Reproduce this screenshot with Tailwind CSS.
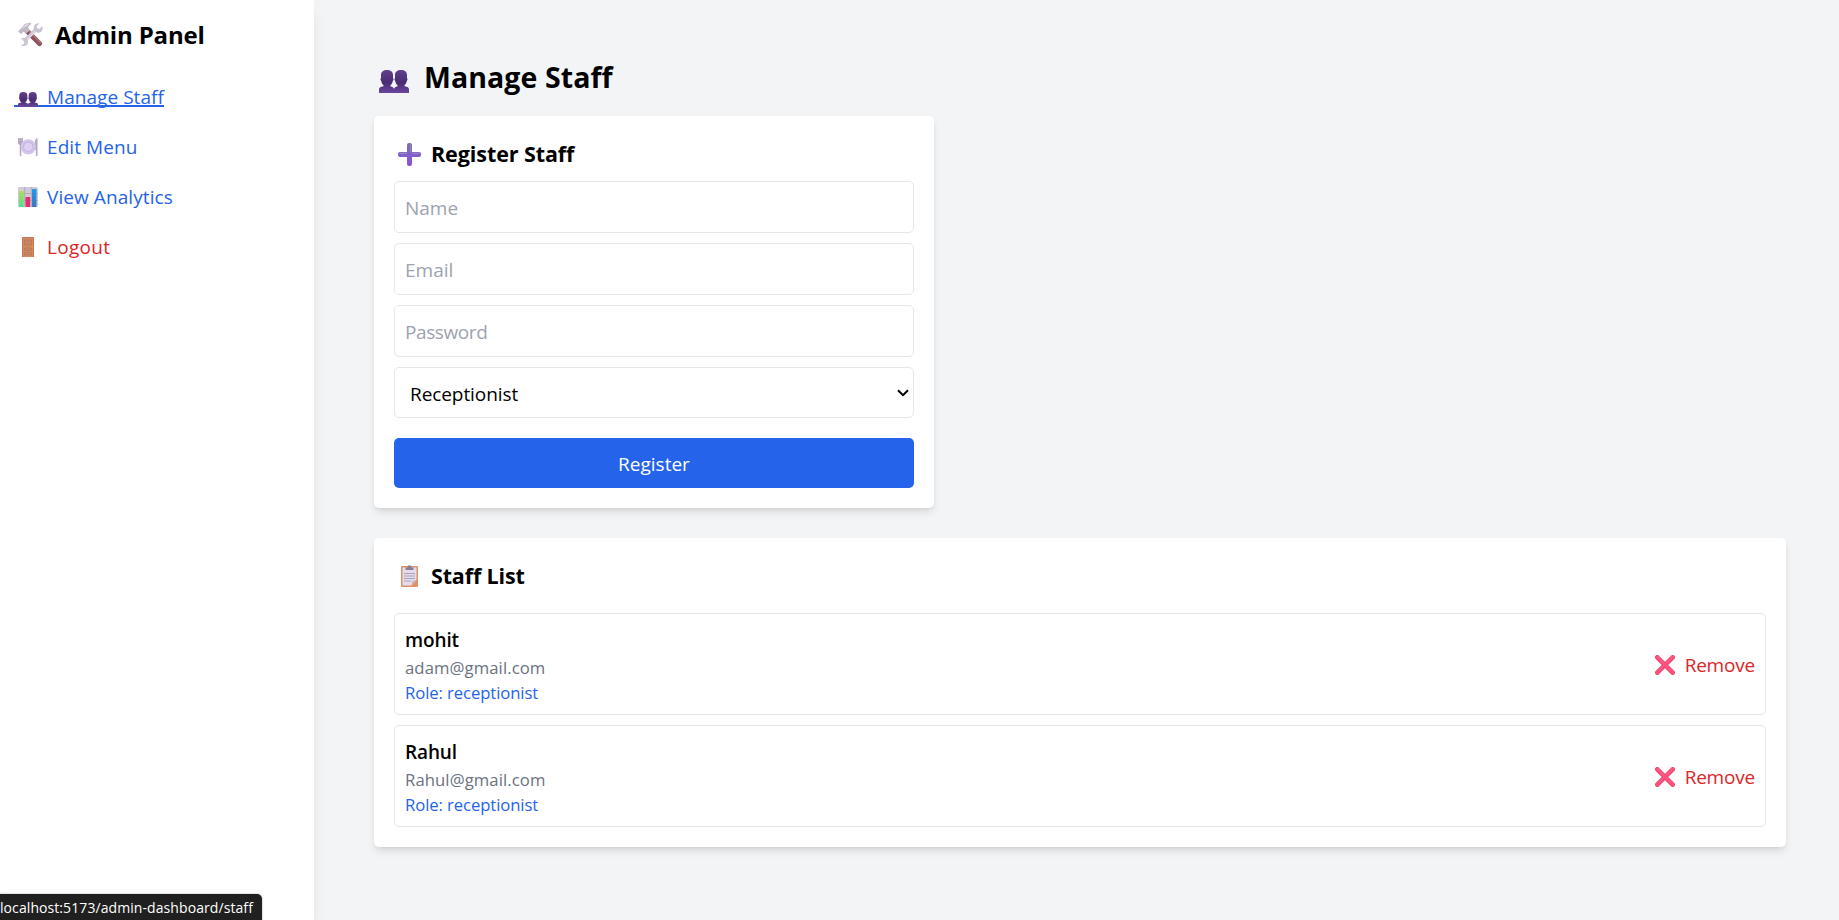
<!DOCTYPE html>
<html lang="en">
<head>
<meta charset="utf-8">
<title>Admin Panel</title>
<script src="https://cdn.jsdelivr.net/npm/@tailwindcss/browser@4"></script>
</head>
<body class="h-[920px] overflow-hidden bg-[#f3f4f6] font-['Open_Sans','Noto_Sans',sans-serif] text-[19px] leading-[30px] text-black">
<svg class="absolute h-0 w-0">
  <defs>
    <linearGradient id="bust" x1="0" y1="0" x2="0" y2="1"><stop offset="0" stop-color="#62408c"/><stop offset=".55" stop-color="#4a2c74"/><stop offset="1" stop-color="#6b469f"/></linearGradient>
    <linearGradient id="plusg" x1="0" y1="0" x2="0" y2="1"><stop offset="0" stop-color="#7a6fae"/><stop offset="1" stop-color="#8a52e0"/></linearGradient>
    <linearGradient id="green" x1="0" y1="0" x2="0" y2="1"><stop offset="0" stop-color="#b4dc54"/><stop offset="1" stop-color="#4fe08c"/></linearGradient>
    <linearGradient id="blue" x1="0" y1="0" x2="0" y2="1"><stop offset="0" stop-color="#1f9be6"/><stop offset="1" stop-color="#3f74c0"/></linearGradient>
    <symbol id="users" viewBox="0 0 30 23" preserveAspectRatio="none">
      <g fill="url(#bust)">
        <path d="M8 0C4.500 0 2 1.800 2 5v3c-.8.6-.6 2.400.2 3 .4 2 1.400 3.700 2.800 5L1.600 17C.6 17.400 0 18.300 0 19.500V23h15v-3.500c0-1.200-.6-2.100-1.600-2.500L11 16c1.400-1.300 2.400-3 2.800-5 .8-.6 1-2.400.2-3V5c0-3.200-2.500-5-6-5z"/>
        <path d="M22 0c-3.500 0-6 1.800-6 5v3c-.8.6-.6 2.400.2 3 .4 2 1.400 3.700 2.800 5l-2.400 1c-1 .4-1.600 1.300-1.600 2.500V23h15v-3.500c0-1.200-.6-2.100-1.600-2.500L25 16c1.400-1.300 2.400-3 2.800-5 .8-.6 1-2.400.2-3V5c0-3.200-2.500-5-6-5z"/>
      </g>
    </symbol>
    <symbol id="cross" viewBox="0 0 20 20">
      <path d="M2.300 2.300l15.400 15.400M17.700 2.300L2.300 17.700" stroke="#f0476b" stroke-width="4.600" stroke-linecap="round"/>
      <path d="M2.500 2l15.500 15.500M17.500 2L2 17.500" stroke="#ff5583" stroke-width="2.600" stroke-linecap="round"/>
    </symbol>
  </defs>
</svg>
<div class="flex h-full">
  <aside class="relative flex w-[314px] shrink-0 flex-col bg-white pt-[17px] pl-[14px] shadow-[0_10px_15px_-3px_rgba(0,0,0,0.1),0_4px_6px_-4px_rgba(0,0,0,0.1)]">
    <h2 class="mb-[30px] flex h-[35px] items-center text-[24px] leading-[35px] font-bold">
      <svg class="mr-[12px] ml-[4px] h-[25px] w-[25px]" viewBox="0 0 25 25" fill="none">
        <path d="M8.500 8.500l13 13" stroke="#8d5260" stroke-width="5" stroke-linecap="round"/>
        <path d="M10 8l13 13" stroke="#ae7474" stroke-width="1.500"/>
        <path d="M0 9.500l3-3L6.500 2 12 .5l1.500 1L10 5l1.500 3.500-3.500 3-2-2-3 2.500z" fill="#bfb9c8"/>
        <path d="M3 7l4-4.500L12 1 8.500 4.500z" fill="#ddd7e4"/>
        <path d="M6 19.500L19.500 6" stroke="#cbc5d4" stroke-width="3.600"/>
        <path d="M7.500 19L19 7.500" stroke="#e2deea" stroke-width="1.300"/>
        <path d="M21.500 1.200l-3 3 .5 2.300 2.300.5 3-3c.9 2.800.1 5-1.700 6.200-1.700 1-3.600.8-5.300-.7-1.700-1.600-2.200-4-.8-6.200 1-1.700 3-2.400 5-2.100z" fill="#c9c3d2"/>
        <path d="M2 17.500l2.500-.2 2 2-.4 2.200-3 2c3 1.100 5.200.4 6.300-1.300 1-1.800.8-3.700-.7-5.200-2-1.600-5.200-1.500-6.700.5z" fill="#c9c3d2"/>
      </svg>
      <span class="tracking-[-0.16px]">Admin Panel</span>
    </h2>
    <nav class="flex flex-col gap-[20px] text-[#2563eb]">
      <a class="flex h-[30px] w-[150px] items-start">
        <span class="flex h-[25px] w-full items-center border-b-2 border-[#2563eb]"><svg class="mt-[11px] mr-[9px] ml-[4px] h-[15px] w-[20px]"><use href="#users"/></svg><span class="mt-[7px] tracking-[0.05px]">Manage Staff</span></span>
      </a>
      <a class="flex h-[30px] items-center">
        <svg class="mr-[9px] ml-[4px] h-[20px] w-[20px]" viewBox="0 0 20 20">
          <path d="M.8 1v4.500M2.500 1v5M4.200 1v4.500M2.500 6v13" stroke="#b3a9bf" stroke-width="1.500" fill="none"/><path d="M0 4h5v2c0 1-1 2-2.500 2S0 7 0 6z" fill="#b3a9bf"/>
          <path d="M19.500 1v18h-1.600v-6h-1V5c0-2 1-3.500 2.600-4z" fill="#b3a9bf"/>
          <circle cx="10.300" cy="9.800" r="7.600" fill="#d3c6ea"/><circle cx="10.300" cy="9.500" r="5.200" fill="#c4b3e3"/><circle cx="10.300" cy="9.800" r="4.300" fill="#ddd0f3"/>
        </svg><span class="tracking-[0.08px]">Edit Menu</span>
      </a>
      <a class="flex h-[30px] items-center">
        <svg class="mr-[9px] ml-[4px] h-[20px] w-[20px]" viewBox="0 0 20 20">
          <rect width="20" height="20" rx="1.500" fill="#d0cbd9"/><path d="M0 6.500h20M0 13.500h20M6.700 0v20M13.300 0v20" stroke="#b1abba"/>
          <rect x="1" y="4" width="4.700" height="16" fill="url(#green)"/><rect x="7.500" y="10" width="4.700" height="10" fill="#e02e70"/><rect x="14" y="2" width="4.500" height="18" fill="url(#blue)"/>
        </svg><span class="tracking-[0.08px]">View Analytics</span>
      </a>
      <a class="flex h-[30px] items-center text-[#dc2626]">
        <svg class="mr-[9px] ml-[4px] h-[20px] w-[20px]" viewBox="0 0 20 20">
          <rect x="4" width="12" height="20" rx=".8" fill="#d08a60"/><path d="M4.500 20V.5h11V20" fill="none" stroke="#bf7657"/>
          <path d="M6.500 3h7v5h-7zM6.500 11h7v2.500h-7zM6.500 15.500h7v2.500h-7z" fill="#cc8360" stroke="#b87355" stroke-width=".7"/><rect x="13.500" y="9" width="1.700" height="1.700" rx=".8" fill="#f09a35"/>
        </svg><span class="tracking-[0.3px]">Logout</span>
      </a>
    </nav>
  </aside>
  <main class="flex-1 pt-[54px] pr-[53px] pl-[60px]">
    <h1 class="mb-[16px] flex h-[46px] items-center text-[28.500px] leading-[45px] font-bold">
      <svg class="mt-[9px] mr-[15px] ml-[5px] h-[23px] w-[30px]"><use href="#users"/></svg><span class="mt-px tracking-[0.08px]">Manage Staff</span>
    </h1>
    <section class="h-[392px] w-[560px] rounded-[5px] bg-white p-5 shadow-[0_5px_8px_-1px_rgba(0,0,0,0.1),0_2px_5px_-2px_rgba(0,0,0,0.1)]">
      <h3 class="mb-[10px] flex h-[35px] items-center text-[21.500px] leading-[35px] font-bold">
        <svg class="mt-px mr-[10px] ml-[4px] h-[23px] w-[23px]" viewBox="0 0 23 23"><path d="M9 2a2 2 0 012-2h1a2 2 0 012 2v7h7a2 2 0 012 2v1a2 2 0 01-2 2h-7v7a2 2 0 01-2 2h-1a2 2 0 01-2-2v-7H2a2 2 0 01-2-2v-1a2 2 0 012-2h7z" fill="url(#plusg)"/><path d="M12.500 1.500v8M2 10.300h7M14.500 10.300H21" stroke="#9689c0" stroke-width="1.200"/></svg>
        <span class="tracking-[-0.08px]">Register Staff</span>
      </h3>
      <input class="mb-[10px] block h-[52px] w-full rounded-[5px] border border-[#e5e7eb] px-[10px] pt-[2px] placeholder:text-[#9ca3af]" placeholder="Name">
      <input class="mb-[10px] block h-[52px] w-full rounded-[5px] border border-[#e5e7eb] px-[10px] pt-[2px] placeholder:text-[#9ca3af]" placeholder="Email">
      <input class="mb-[10px] block h-[52px] w-full rounded-[5px] border border-[#e5e7eb] px-[10px] pt-[2px] tracking-[-0.4px] placeholder:text-[#9ca3af]" placeholder="Password">
      <div class="mb-[20px] flex h-[51px] items-center justify-between rounded-[5px] border border-[#e5e7eb] pr-[4px] pl-[15px]">
        <span class="mt-[2px] tracking-[-0.08px]">Receptionist</span>
        <svg class="h-[8px] w-[12px]" viewBox="0 0 12 8" fill="none"><path d="M1 1.200l5 5 5-5" stroke="#000" stroke-width="2"/></svg>
      </div>
      <button class="block h-[50px] w-full rounded-[5px] bg-[#2563eb] pt-[2px] text-white">Register</button>
    </section>
    <section class="mt-[30px] h-[309px] rounded-[5px] bg-white p-5 shadow-[0_5px_8px_-1px_rgba(0,0,0,0.1),0_2px_5px_-2px_rgba(0,0,0,0.1)]">
      <h3 class="mb-[20px] flex h-[35px] items-center text-[21.500px] leading-[35px] font-bold">
        <svg class="mr-[13px] ml-[7px] h-[22px] w-[17px]" viewBox="0 0 17 22"><rect y="1" width="17" height="21" rx="1.200" fill="#dd9265"/><path d="M1.500 2.500h14v12.500l-5 5.500h-9z" fill="#e4dced"/><path d="M10.500 20.500l.8-4.500 4.200-1z" fill="#c6b0c8"/><path d="M3 8.500h11M3 11h11M3 13.500h11M3 16h7" stroke="#aaa2b8"/><path d="M4.500 2.500h2L7 .5h3l.5 2h2V5h-8z" fill="#897e91"/></svg>
        <span class="tracking-[-0.15px]">Staff List</span>
      </h3>
      <ul class="flex flex-col gap-[10px]">
        <li class="flex h-[102px] items-center justify-between rounded-[5px] border border-[#e5e7eb] pr-[10px] pl-[10px]">
          <div class="pt-[2px]">
            <p class="font-semibold tracking-[-0.12px]">mohit</p>
            <p class="text-[16.700px] leading-[25px] tracking-[0.08px] text-[#6b7280]">adam@gmail.com</p>
            <p class="text-[16.700px] leading-[25px] tracking-[-0.1px] text-[#2563eb]">Role: receptionist</p>
          </div>
          <button class="flex items-center gap-[10px] text-[#dc2626]"><svg class="mt-[2px] h-[20px] w-[20px]"><use href="#cross"/></svg><span class="mt-[2px] tracking-[-0.2px]">Remove</span></button>
        </li>
        <li class="flex h-[102px] items-center justify-between rounded-[5px] border border-[#e5e7eb] pr-[10px] pl-[10px]">
          <div class="pt-[2px]">
            <p class="font-semibold tracking-[-0.12px]">Rahul</p>
            <p class="text-[16.700px] leading-[25px] tracking-[0.08px] text-[#6b7280]">Rahul@gmail.com</p>
            <p class="text-[16.700px] leading-[25px] tracking-[-0.1px] text-[#2563eb]">Role: receptionist</p>
          </div>
          <button class="flex items-center gap-[10px] text-[#dc2626]"><svg class="mt-[2px] h-[20px] w-[20px]"><use href="#cross"/></svg><span class="mt-[2px] tracking-[-0.2px]">Remove</span></button>
        </li>
      </ul>
    </section>
  </main>
</div>
<div class="absolute bottom-0 left-0 flex h-[26px] w-[262px] items-center rounded-tr-[5px] bg-[#202020] pt-[1px] text-[14px] leading-[26px] tracking-[0.08px] whitespace-nowrap text-white shadow-[0_0_2px_rgba(0,0,0,0.4)]">localhost:5173/admin-dashboard/staff</div>
</body>
</html>
